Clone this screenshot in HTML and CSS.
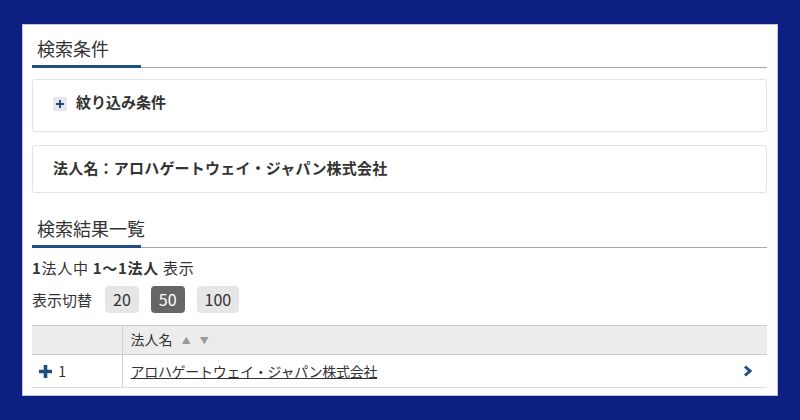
FILE: index.html
```html
<!DOCTYPE html>
<html lang="ja">
<head>
<meta charset="utf-8">
<title>検索結果一覧</title>
<link rel="stylesheet" href="styles.css">
</head>
<body>
<main class="panel">
  <h2 class="section-title">検索条件</h2>

  <div class="box box-filter">
    <span class="toggle-icon">
      <svg width="8" height="8" viewBox="0 0 8 8"><path d="M4 0v8M0 4h8" stroke="#1f4f80" stroke-width="2"/></svg>
    </span>
    <span class="box-label">紋り込み条件</span>
  </div>

  <div class="box box-name">
    <span class="box-label name-label">法人名：アロハゲートウェイ・ジャパン株式会社</span>
  </div>

  <h2 class="section-title result-title">検索結果一覧</h2>

  <p class="count"><b>1</b>法人中 <b>1〜1法人</b> 表示</p>

  <div class="per-page">
    <span class="per-page-label">表示切替</span>
    <button class="pg-btn">20</button>
    <button class="pg-btn is-active">50</button>
    <button class="pg-btn">100</button>
  </div>

  <table class="result-table">
    <thead>
      <tr>
        <th class="col-no"></th>
        <th class="col-name">法人名 <span class="sort">▲</span> <span class="sort">▼</span></th>
      </tr>
    </thead>
    <tbody>
      <tr>
        <td class="col-no">
          <svg class="row-plus" width="13" height="13" viewBox="0 0 13 13"><path d="M6.5 0v13M0 6.5h13" stroke="#1f4f80" stroke-width="3.6"/></svg>
          <span class="row-num">1</span>
        </td>
        <td class="col-name">
          <div class="name-cell">
            <a href="#" class="corp-link">アロハゲートウェイ・ジャパン株式会社</a>
            <svg class="chevron" width="10" height="12" viewBox="0 0 10 12"><path d="M2 1.5l5 4.5-5 4.5" fill="none" stroke="#1f4f80" stroke-width="3"/></svg>
          </div>
        </td>
      </tr>
    </tbody>
  </table>
</main>
</body>
</html>
```

FILE: styles.css
```css
html, body {
  margin: 0;
  padding: 0;
}

body {
  background: #0d1f80;
  font-family: "Noto Sans CJK JP", "Noto Sans", sans-serif;
  color: #333;
  padding-top: 24px;
  height: 420px;
  box-sizing: border-box;
  overflow: hidden;
}

.panel {
  margin-left: 22px;
  width: 756px;
  box-sizing: border-box;
  background: #fff;
  border: 1px solid #c3c6da;
  padding: 10px 10px 7px 9px;
}

.section-title {
  position: relative;
  margin: 0;
  padding: 0 5px 6px;
  font-size: 18px;
  line-height: 26px;
  font-weight: normal;
  color: #333;
  border-bottom: 1px solid #aaa;
}

/* accent bar sitting on the heading rule */
.section-title::after {
  content: "";
  position: absolute;
  left: 0;
  bottom: -1px;
  width: 109px;
  height: 3px;
  background: #1f4f80;
}

.result-title {
  margin-top: 22px;
}

.box {
  border: 1px solid #e3e3e3;
  border-radius: 3px;
  box-shadow: 0 0 1px rgba(0, 0, 0, 0.08);
  display: flex;
  align-items: center;
  padding-left: 20px;
}

.box-filter {
  margin-top: 11px;
  padding-top: 12px;
  padding-bottom: 19px;
}

.box-name {
  margin-top: 13px;
  padding-top: 12px;
  padding-bottom: 14px;
}

.box-label {
  font-size: 15px;
  line-height: 20px;
  font-weight: bold;
  color: #333;
}

.name-label {
  letter-spacing: 0.2px;
}

.toggle-icon {
  width: 14px;
  height: 14px;
  background: #e6e6e6;
  border-radius: 2px;
  display: flex;
  align-items: center;
  justify-content: center;
  margin-right: 9px;
  margin-top: 3px;
}

.count {
  margin: 10px 0 0;
  font-size: 15px;
  line-height: 20px;
  letter-spacing: 0.7px;
}

.per-page {
  margin-top: 8px;
  display: flex;
  align-items: center;
  gap: 12px;
}

.per-page-label {
  font-size: 15px;
  line-height: 20px;
  margin-right: 1px;
}

.pg-btn {
  font-family: inherit;
  font-size: 16px;
  line-height: 27px;
  height: 27px;
  padding: 0 8px;
  min-width: 33px;
  border: none;
  border-radius: 4px;
  background: #e6e6e6;
  color: #333;
}

.pg-btn.is-active {
  background: #666;
  color: #fff;
}

.result-table {
  margin-top: 12px;
  width: 100%;
  border-collapse: collapse;
  font-size: 14px;
}

.result-table th {
  background: #ececec;
  border-top: 1px solid #ccc;
  border-bottom: 1px solid #ccc;
  height: 28px;
  padding: 0 8px;
  font-weight: normal;
  text-align: left;
  line-height: 20px;
}

.result-table td {
  height: 32px;
  padding: 0 8px;
  border-bottom: 1px solid #ddd;
  line-height: 20px;
}

.result-table .col-no {
  width: 90px;
  box-sizing: border-box;
  padding-left: 7px;
}

.result-table .col-name {
  border-left: 1px solid #d0d0d0;
}

.sort {
  font-size: 9px;
  color: #999;
  margin-left: 6px;
  vertical-align: 1px;
}

.row-plus {
  vertical-align: -1px;
}

.row-num {
  margin-left: 3px;
}

.name-cell {
  display: flex;
  align-items: center;
  justify-content: space-between;
  padding-right: 6px;
}

.corp-link {
  color: #333;
  text-decoration: underline;
  letter-spacing: -0.3px;
}

.chevron {
  display: block;
}
```
